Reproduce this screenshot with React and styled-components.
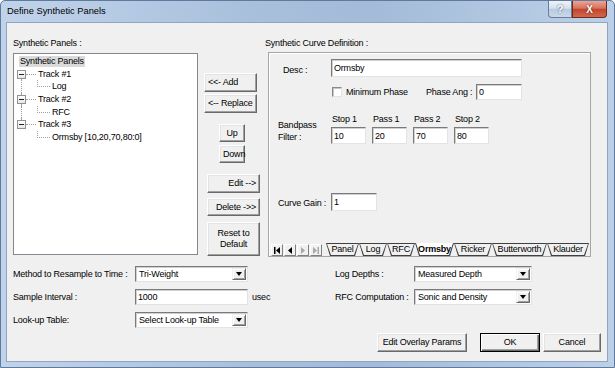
import React from 'react';
import styled, { createGlobalStyle } from 'styled-components';

const GlobalStyle = createGlobalStyle`
  html, body { margin: 0; padding: 0; }
  body {
    font-family: "Liberation Sans", Arial, sans-serif;
    font-size: 9px;
    letter-spacing: -0.2px;
    color: #000;
    background: #fff;
  }
  *, *::before, *::after { box-sizing: border-box; }
`;

const Window = styled.div`
  width: 615px;
  height: 368px;
  display: flex;
  flex-direction: column;
  border: 1px solid #5f7a9c;
  border-radius: 5px 5px 0 0;
  background: linear-gradient(90deg, #c0d3ea 0%, #a9c0dc 40%, #a3bbd9 60%, #bcd0e7 100%);
  overflow: hidden;
`;

const TitleBar = styled.div`
  height: 21px;
  display: flex;
  align-items: flex-start;
  padding: 0 7px 0 6px;
`;

const Title = styled.div`
  flex: 1;
  line-height: 21px;
  font-size: 9.3px;
  letter-spacing: 0;
`;

const CaptionBtn = styled.div`
  width: ${p => p.$w}px;
  height: 17px;
  display: flex;
  align-items: center;
  justify-content: center;
  color: #fff;
  font-weight: bold;
  font-size: ${p => p.$fs}px;
  letter-spacing: 0;
  border: 1px solid ${p => (p.$close ? '#6d2a1e' : '#6a7d97')};
  border-top: none;
  border-radius: ${p => (p.$close ? '0 0 4px 0' : '0 0 0 4px')};
  background: ${p =>
    p.$close
      ? 'linear-gradient(#eaa597, #d8725b 45%, #c3452d 52%, #d0694e)'
      : 'linear-gradient(#eef3f9, #d6e1ee 45%, #b9cadd 52%, #cbd9ea)'};
  text-shadow: 0 0 2px ${p => (p.$close ? '#5a1408' : '#2c3f5c')};
`;

const Client = styled.div`
  flex: 1;
  margin: 0 6px 5px 5px;
  background: #f0f0f0;
  border: 1px solid #8fa5c0;
  display: flex;
  flex-direction: column;
`;

const TopRow = styled.div`
  display: flex;
  align-items: flex-start;
  margin-top: 15px;
  padding-left: 6px;
`;

const Column = styled.div`
  width: ${p => p.$w}px;
  margin-left: ${p => p.$ml || 0}px;
  display: flex;
  flex-direction: column;
  align-items: flex-start;
  padding-top: ${p => p.$pt || 0}px;
`;

const Caption = styled.div`
  height: 11px;
  line-height: 11px;
  white-space: nowrap;
`;

/* ---------- tree ---------- */

const Tree = styled.div`
  width: 185px;
  height: 202px;
  margin-top: 4px;
  background: #fff;
  border: 1px solid #828790;
  padding: 1px 0 0 3px;
`;

const TreeRow = styled.div`
  height: 12.7px;
  display: flex;
  align-items: center;
  white-space: nowrap;
`;

const TreeText = styled.span`
  line-height: 11px;
  padding: 0 1px;
  margin-left: ${p => p.$ml || 0}px;
  background: ${p => (p.$selected ? '#dadada' : 'transparent')};
`;

const BoxCell = styled.span`
  width: 9px;
  align-self: stretch;
  display: flex;
  flex-direction: column;
  align-items: center;
`;

const Stub = styled.span`
  flex: 1;
  width: 0;
  border-left: 1px dotted ${p => (p.$on ? '#a0a0a0' : 'transparent')};
`;

const ExpandBox = styled.span`
  width: 9px;
  height: 9px;
  flex: none;
  border: 1px solid #919191;
  background: linear-gradient(#fff, #e6e6e6);
  display: flex;
  align-items: center;
  justify-content: center;
`;

const Minus = styled.span`
  width: 5px;
  height: 1px;
  background: #222;
`;

const HLine = styled.span`
  width: 10px;
  margin-right: 1px;
  border-top: 1px dotted #a0a0a0;
`;

const Elbow = styled.span`
  width: 13px;
  height: 7px;
  margin-left: 11px;
  align-self: flex-start;
  border-left: 1px dotted #a0a0a0;
  border-bottom: 1px dotted #a0a0a0;
`;

const TrackNode = ({ label, child, first, last }) => (
  <>
    <TreeRow>
      <BoxCell>
        <Stub $on={!first} />
        <ExpandBox><Minus /></ExpandBox>
        <Stub $on={!last} />
      </BoxCell>
      <HLine />
      <TreeText>{label}</TreeText>
    </TreeRow>
    <TreeRow>
      <BoxCell>
        <Stub $on={!last} />
      </BoxCell>
      <Elbow />
      <TreeText $ml={1}>{child}</TreeText>
    </TreeRow>
  </>
);

/* ---------- buttons ---------- */

const Btn = styled.button`
  font: inherit;
  letter-spacing: inherit;
  color: #000;
  width: ${p => p.$w}px;
  height: ${p => p.$h || 19}px;
  margin-top: ${p => p.$mt || 0}px;
  margin-left: ${p => p.$ml || 0}px;
  padding: 0 3px;
  line-height: 11px;
  text-align: ${p => p.$align || 'center'};
  white-space: pre-line;
  background: #f0f0f0;
  border: 1px solid;
  border-color: ${p => (p.$default ? '#000' : '#fff #696969 #696969 #fff')};
  box-shadow: ${p =>
    p.$default
      ? 'inset 1px 1px 0 #fff, inset -1px -1px 0 #696969, inset -2px -2px 0 #a0a0a0'
      : 'inset -1px -1px 0 #a0a0a0, inset 1px 1px 0 #e3e3e3'};
  cursor: default;
`;

/* ---------- panel ---------- */

const Panel = styled.div`
  width: 323px;
  height: 205px;
  margin: 3px 0 0 3px;
  border: 1px solid #a6a6a6;
  box-shadow: inset 1px 1px 0 #fff;
  display: flex;
  flex-direction: column;
`;

const PanelRow = styled.div`
  display: flex;
  align-items: ${p => p.$align || 'center'};
  margin-top: ${p => p.$mt || 0}px;
`;

const RowLabel = styled.div`
  width: ${p => p.$w || 62}px;
  padding-left: ${p => p.$pl || 9}px;
  margin-top: ${p => p.$mt || 0}px;
  line-height: ${p => p.$lh || 11}px;
  white-space: pre-line;
  flex: none;
`;

const Field = styled.input`
  width: ${p => p.$w}px;
  height: ${p => p.$h || 17}px;
  margin-top: ${p => p.$mt || 0}px;
  margin-left: ${p => p.$ml || 0}px;
  padding: 0 0 0 2px;
  font: inherit;
  letter-spacing: inherit;
  color: #000;
  background: #fff;
  border: 1px solid;
  border-color: #7a7a7a #e3e3e3 #e3e3e3 #7a7a7a;
  box-shadow: inset 1px 1px 0 #d0d0d0;
  outline: none;
  flex: none;
`;

const CheckBox = styled.span`
  width: 10px;
  height: 10px;
  margin-left: 1px;
  background: #fff;
  border: 1px solid;
  border-color: #8a8a8a #e3e3e3 #e3e3e3 #8a8a8a;
  box-shadow: inset 1px 1px 0 #c4c4c4;
  flex: none;
`;

const InlineLabel = styled.span`
  width: ${p => p.$w}px;
  margin-left: ${p => p.$ml || 0}px;
  white-space: nowrap;
  flex: none;
`;

const FilterCol = styled.div`
  width: 35px;
  margin-right: 6px;
  display: flex;
  flex-direction: column;
`;

const FilterLabel = styled.div`
  height: 11px;
  line-height: 11px;
  padding-left: 1px;
  white-space: nowrap;
`;

/* ---------- sheet tabs ---------- */

const TabStrip = styled.div`
  margin-top: auto;
  height: 13px;
  display: flex;
  align-items: stretch;
  padding-left: 2px;
`;

const NavGroup = styled.div`
  display: flex;
  gap: 1px;
  margin-right: 4px;
  padding-top: 1px;
`;

const NavBtn = styled.span`
  width: 12px;
  height: 12px;
  background: #f0f0f0;
  border: 1px solid;
  border-color: #fff #808080 #808080 #fff;
  display: flex;
  align-items: center;
  justify-content: center;
  color: ${p => (p.$off ? '#a8a8a8' : '#000')};
`;

const tabShape = 'polygon(0 0, 100% 0, calc(100% - 4px) 100%, 4px 100%)';

const Tab = styled.div`
  width: ${p => p.$w}px;
  height: 13px;
  display: flex;
  background: #404040;
  clip-path: ${tabShape};
  padding: ${p => (p.$active ? '0 1px 1px' : '1px 1px 1px')};
`;

const TabFace = styled.div`
  flex: 1;
  display: flex;
  align-items: center;
  justify-content: center;
  background: ${p => (p.$active ? '#fff' : '#f0f0f0')};
  clip-path: ${tabShape};
  font-weight: ${p => (p.$active ? 'bold' : 'normal')};
  line-height: 11px;
  white-space: nowrap;
`;

const NavIcon = ({ dir, bar }) => (
  <svg width="8" height="7" viewBox="0 0 8 7">
    {dir === 'left' ? (
      <>
        {bar && <rect x="1" y="0" width="1.5" height="7" fill="currentColor" />}
        <path d={bar ? 'M7 0 L3 3.5 L7 7 Z' : 'M6 0 L2 3.5 L6 7 Z'} fill="currentColor" />
      </>
    ) : (
      <>
        <path d={bar ? 'M1 0 L5 3.5 L1 7 Z' : 'M2 0 L6 3.5 L2 7 Z'} fill="currentColor" />
        {bar && <rect x="5.5" y="0" width="1.5" height="7" fill="currentColor" />}
      </>
    )}
  </svg>
);

/* ---------- bottom form ---------- */

const BottomArea = styled.div`
  margin-top: 9px;
  padding: 0 6px;
  display: flex;
  flex-direction: column;
`;

const FormsRow = styled.div`
  display: flex;
  align-items: flex-start;
`;

const Form = styled.div`
  width: ${p => p.$w || 'auto'};
  display: flex;
  flex-direction: column;
  gap: 7px;
`;

const FormRow = styled.div`
  height: 16px;
  display: flex;
  align-items: center;
`;

const FormLabel = styled.span`
  width: ${p => p.$w}px;
  white-space: nowrap;
  flex: none;
`;

const Unit = styled.span`
  margin-left: 4px;
`;

const Select = styled.div`
  width: ${p => p.$w}px;
  height: 16px;
  display: flex;
  align-items: stretch;
  padding: 1px;
  background: #fff;
  border: 1px solid;
  border-color: #7a7a7a #e3e3e3 #e3e3e3 #7a7a7a;
  box-shadow: inset 1px 1px 0 #d0d0d0;
`;

const SelectText = styled.span`
  flex: 1;
  padding-left: 2px;
  line-height: 12px;
  white-space: nowrap;
`;

const DropBtn = styled.span`
  width: 14px;
  background: #f0f0f0;
  border: 1px solid;
  border-color: #f0f0f0 #696969 #696969 #f0f0f0;
  box-shadow: inset 1px 1px 0 #fff, inset -1px -1px 0 #a0a0a0;
  display: flex;
  align-items: center;
  justify-content: center;

  &::after {
    content: '';
    border-left: 3.5px solid transparent;
    border-right: 3.5px solid transparent;
    border-top: 4px solid #000;
  }
`;

const Dropdown = ({ w, value }) => (
  <Select $w={w}>
    <SelectText>{value}</SelectText>
    <DropBtn />
  </Select>
);

const ButtonRow = styled.div`
  display: flex;
  justify-content: flex-end;
  margin-top: 5px;
`;

const tabs = [
  { name: 'Panel', w: 33 },
  { name: 'Log', w: 28 },
  { name: 'RFC', w: 28 },
  { name: 'Ormsby', w: 39, active: true },
  { name: 'Ricker', w: 38 },
  { name: 'Butterworth', w: 55 },
  { name: 'Klauder', w: 42 },
];

const filters = [
  { label: 'Stop 1', value: '10' },
  { label: 'Pass 1', value: '20' },
  { label: 'Pass 2', value: '70' },
  { label: 'Stop 2', value: '80' },
];

export default function App() {
  return (
    <>
      <GlobalStyle />
      <Window>
        <TitleBar>
          <Title>Define Synthetic Panels</Title>
          <CaptionBtn $w={24} $fs={11}>?</CaptionBtn>
          <CaptionBtn $w={35} $fs={10} $close>X</CaptionBtn>
        </TitleBar>

        <Client>
          <TopRow>
            <Column $w={185}>
              <Caption>Synthetic Panels :</Caption>
              <Tree>
                <TreeRow>
                  <TreeText $ml={2} $selected>Synthetic Panels</TreeText>
                </TreeRow>
                <TrackNode label="Track #1" child="Log" first />
                <TrackNode label="Track #2" child="RFC" />
                <TrackNode label="Track #3" child="Ormsby [10,20,70,80:0]" last />
              </Tree>
            </Column>

            <Column $w={56} $ml={6} $pt={35}>
              <Btn $w={53} $align="left">{'<<- Add'}</Btn>
              <Btn $w={53} $mt={2} $align="left">{'<-- Replace'}</Btn>
              <Btn $w={26} $h={18} $mt={11} $ml={15}>Up</Btn>
              <Btn $w={26} $h={18} $mt={3} $ml={15}>Down</Btn>
              <Btn $w={53} $mt={11} $ml={3} $align="right">{'Edit -->'}</Btn>
              <Btn $w={53} $h={18} $mt={5} $ml={3} $align="right">{'Delete ->>'}</Btn>
              <Btn $w={53} $h={34} $mt={6} $ml={3}>{'Reset to\nDefault'}</Btn>
            </Column>

            <Column $w={326} $ml={5}>
              <Caption>Synthetic Curve Definition :</Caption>
              <Panel>
                <PanelRow $mt={6}>
                  <RowLabel $pl={14} $mt={5}>Desc :</RowLabel>
                  <Field $w={191} $h={18} defaultValue="Ormsby" readOnly />
                </PanelRow>

                <PanelRow $mt={7}>
                  <RowLabel />
                  <CheckBox />
                  <InlineLabel $w={80} $ml={4}>Minimum Phase</InlineLabel>
                  <InlineLabel $w={50}>Phase Ang :</InlineLabel>
                  <Field $w={46} $h={16} defaultValue="0" readOnly />
                </PanelRow>

                <PanelRow $mt={14} $align="flex-start">
                  <RowLabel $mt={5} $lh={12}>{'Bandpass\nFilter :'}</RowLabel>
                  {filters.map(f => (
                    <FilterCol key={f.label}>
                      <FilterLabel>{f.label}</FilterLabel>
                      <Field $w={35} $mt={2} defaultValue={f.value} readOnly />
                    </FilterCol>
                  ))}
                </PanelRow>

                <PanelRow $mt={49}>
                  <RowLabel $mt={3}>Curve Gain :</RowLabel>
                  <Field $w={46} $h={18} defaultValue="1" readOnly />
                </PanelRow>

                <TabStrip>
                  <NavGroup>
                    <NavBtn><NavIcon dir="left" bar /></NavBtn>
                    <NavBtn><NavIcon dir="left" /></NavBtn>
                    <NavBtn $off><NavIcon dir="right" /></NavBtn>
                    <NavBtn $off><NavIcon dir="right" bar /></NavBtn>
                  </NavGroup>
                  {tabs.map(t => (
                    <Tab key={t.name} $w={t.w} $active={t.active}>
                      <TabFace $active={t.active}>{t.name}</TabFace>
                    </Tab>
                  ))}
                </TabStrip>
              </Panel>
            </Column>
          </TopRow>

          <BottomArea>
            <FormsRow>
              <Form $w="322px">
                <FormRow>
                  <FormLabel $w={122}>Method to Resample to Time :</FormLabel>
                  <Dropdown w={113} value="Tri-Weight" />
                </FormRow>
                <FormRow>
                  <FormLabel $w={122}>Sample Interval :</FormLabel>
                  <Field $w={113} $h={16} defaultValue="1000" readOnly />
                  <Unit>usec</Unit>
                </FormRow>
                <FormRow>
                  <FormLabel $w={122}>Look-up Table:</FormLabel>
                  <Dropdown w={113} value="Select Look-up Table" />
                </FormRow>
              </Form>
              <Form>
                <FormRow>
                  <FormLabel $w={79}>Log Depths :</FormLabel>
                  <Dropdown w={118} value="Measured Depth" />
                </FormRow>
                <FormRow>
                  <FormLabel $w={79}>RFC Computation :</FormLabel>
                  <Dropdown w={118} value="Sonic and Density" />
                </FormRow>
              </Form>
            </FormsRow>

            <ButtonRow>
              <Btn $w={90}>Edit Overlay Params</Btn>
              <Btn $w={60} $ml={13} $default>OK</Btn>
              <Btn $w={58} $ml={3}>Cancel</Btn>
            </ButtonRow>
          </BottomArea>
        </Client>
      </Window>
    </>
  );
}
